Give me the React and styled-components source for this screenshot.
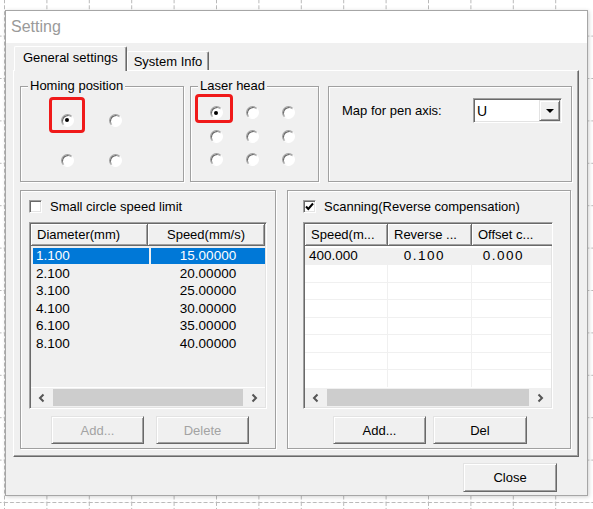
import React from "react";
import styled, { createGlobalStyle } from "styled-components";

const GlobalStyle = createGlobalStyle`
  html, body { margin: 0; padding: 0; background: #fff; }
  body {
    font-family: "Liberation Sans", Arial, sans-serif;
    font-size: 13px;
    color: #000;
  }
  * { box-sizing: border-box; }
`;

const Page = styled.div`
  position: relative;
  width: 593px;
  height: 509px;
  overflow: hidden;
  padding: 10px 0 0 5px;
`;

const Backdrop = styled.svg`
  position: absolute;
  top: 0;
  left: 0;
`;

const Window = styled.div`
  position: relative;
  width: 583px;
  height: 486px;
  border: 1px solid #a6a6a6;
  box-shadow: 1px 1px 4px rgba(0, 0, 0, 0.18);
  display: flex;
  flex-direction: column;
  background: #f0f0f0;
`;

const TitleBar = styled.div`
  height: 32px;
  flex: none;
  background: #fff;
  display: flex;
  align-items: center;
  padding-left: 5px;
  font-size: 16px;
  color: #9a9a9a;
`;

const Body = styled.div`
  flex: 1;
  padding: 3px 0 0 7px;
`;

const TabStrip = styled.div`
  display: flex;
  align-items: flex-end;
  height: 24px;
  padding-left: 1px;
  position: relative;
  z-index: 2;
`;

const Tab = styled.div`
  height: ${(p) => (p.$active ? 25 : 19)}px;
  margin-bottom: ${(p) => (p.$active ? -1 : 0)}px;
  padding: 0 ${(p) => (p.$active ? 8 : 6)}px ${(p) => (p.$active ? 3 : 0)}px;
  display: flex;
  align-items: center;
  background: #f0f0f0;
  border-top: 1px solid #fff;
  border-left: 1px solid #fff;
  border-right: 1px solid #696969;
  box-shadow: inset -1px 0 0 #a0a0a0;
  border-radius: 2px 2px 0 0;
`;

const Panel = styled.div`
  width: 566px;
  height: 387px;
  border-top: 1px solid #fff;
  border-left: 1px solid #fff;
  border-right: 1px solid #696969;
  border-bottom: 1px solid #696969;
  box-shadow: inset -1px -1px 0 #a0a0a0;
  padding: 15px 0 0 6px;
  display: flex;
  flex-direction: column;
`;

const GroupRow = styled.div`
  display: flex;
  flex: none;
  height: ${(p) => p.$h}px;
  margin-top: ${(p) => p.$mt || 0}px;
`;

const Group = styled.div`
  width: ${(p) => p.$w}px;
  margin-left: ${(p) => p.$ml || 0}px;
  height: 100%;
  border: 1px solid #a0a0a0;
  box-shadow: inset 1px 1px 0 #fff, 1px 1px 0 #fff;
  display: flex;
  flex-direction: column;
  padding: ${(p) => p.$pad || "0"};
`;

const Legend = styled.span`
  align-self: flex-start;
  margin: -9px 0 0 7px;
  padding: 0 2px;
  line-height: 16px;
  background: #f0f0f0;
`;

const RadioGrid = styled.div`
  display: grid;
  grid-template-columns: repeat(${(p) => p.$cols}, ${(p) => p.$cw}px);
  grid-auto-rows: ${(p) => p.$rh}px;
  place-items: center;
  margin: ${(p) => p.$m};
`;

const Radio = styled.span`
  position: relative;
  width: 13px;
  height: 13px;
  border-radius: 50%;
  background: #fff;
  border: 1px solid;
  border-color: #a0a0a0 #fff #fff #a0a0a0;
  box-shadow: inset 1px 1px 0 #696969;
  display: flex;
  align-items: center;
  justify-content: center;
  &::after {
    content: "";
    width: 4px;
    height: 4px;
    border-radius: 50%;
    background: #000;
    display: ${(p) => (p.$checked ? "block" : "none")};
  }
`;

const Highlight = styled.span`
  position: absolute;
  left: ${(p) => p.$l}px;
  top: ${(p) => p.$t}px;
  width: ${(p) => p.$w}px;
  height: ${(p) => p.$h}px;
  border: 3px solid #f01a1a;
  border-radius: 4px;
  pointer-events: none;
`;

const FieldRow = styled.div`
  display: flex;
  align-items: center;
  height: 25px;
`;

const Combo = styled.div`
  margin-left: auto;
  width: 89px;
  height: 25px;
  background: #fff;
  border: 1px solid;
  border-color: #a0a0a0 #fff #fff #a0a0a0;
  box-shadow: inset 1px 1px 0 #696969, inset -1px -1px 0 #e3e3e3;
  padding: 1px;
  display: flex;
`;

const ComboValue = styled.span`
  flex: 1;
  padding-left: 2px;
  display: flex;
  align-items: center;
  font-size: 14px;
`;

const DropButton = styled.span`
  width: 21px;
  background: #f0f0f0;
  border: 1px solid;
  border-color: #e3e3e3 #696969 #696969 #e3e3e3;
  box-shadow: inset 1px 1px 0 #fff, inset -1px -1px 0 #a0a0a0;
  display: flex;
  align-items: center;
  justify-content: center;
  &::after {
    content: "";
    border-left: 4px solid transparent;
    border-right: 4px solid transparent;
    border-top: 4px solid #000;
  }
`;

const CheckRow = styled.label`
  display: flex;
  align-items: center;
  gap: 8px;
  height: 13px;
  line-height: 16px;
`;

const CheckBox = styled.span`
  width: 13px;
  height: 13px;
  flex: none;
  background: #fff;
  border: 1px solid;
  border-color: #a0a0a0 #fff #fff #a0a0a0;
  box-shadow: inset 1px 1px 0 #696969, inset -1px -1px 0 #e3e3e3;
  display: flex;
  align-items: center;
  justify-content: center;
`;

const ListView = styled.div`
  width: ${(p) => p.$w}px;
  height: 187px;
  margin-top: 9px;
  flex: none;
  border: 1px solid;
  border-color: #a0a0a0 #fff #fff #a0a0a0;
  box-shadow: inset 1px 1px 0 #696969, inset -1px -1px 0 #e3e3e3;
  padding: 1px;
  background: ${(p) => p.$bg};
  display: flex;
  flex-direction: column;
  overflow: hidden;
`;

const HeaderRow = styled.div`
  display: flex;
  flex: none;
  height: 22px;
`;

const HeaderCell = styled.div`
  width: ${(p) => p.$w}px;
  flex: none;
  display: flex;
  align-items: center;
  justify-content: ${(p) => (p.$center ? "center" : "flex-start")};
  padding-left: ${(p) => (p.$center ? 0 : 6)}px;
  background: #f0f0f0;
  border-right: 1px solid #696969;
  border-bottom: 1px solid #696969;
  box-shadow: inset 1px 1px 0 #fff, inset -1px -1px 0 #a0a0a0;
  white-space: nowrap;
  overflow: hidden;
`;

const Rows = styled.div`
  flex: 1;
  padding-top: 1.5px;
  overflow: hidden;
`;

const Row = styled.div`
  display: flex;
  height: 17.5px;
  padding-left: ${(p) => p.$pl || 0}px;
  gap: ${(p) => p.$gap || 0}px;
  background: ${(p) => p.$shade || "transparent"};
  border-bottom: ${(p) => (p.$grid ? "1px solid #f0f0f0" : "none")};
`;

const Cell = styled.div`
  width: ${(p) => p.$w}px;
  flex: none;
  height: ${(p) => (p.$grid ? "100%" : "16.5px")};
  display: flex;
  align-items: center;
  justify-content: ${(p) => (p.$center ? "center" : "flex-start")};
  padding-left: ${(p) => p.$pl || 0}px;
  padding-right: ${(p) => p.$pr || 0}px;
  font-size: 13.5px;
  letter-spacing: ${(p) => p.$ls || 0}px;
  background: ${(p) => (p.$selected ? "#0078d7" : "transparent")};
  color: ${(p) => (p.$selected ? "#fff" : "#000")};
  border-right: ${(p) => (p.$grid ? "1px solid #f0f0f0" : "none")};
  white-space: nowrap;
`;

const ScrollBar = styled.div`
  flex: none;
  height: 20px;
  display: flex;
  background: #f0f0f0;
  border-top: 1px solid #fff;
`;

const ScrollArrow = styled.span`
  width: 22px;
  display: flex;
  align-items: center;
  justify-content: center;
`;

const ScrollThumb = styled.span`
  flex: 1;
  background: #cdcdcd;
  margin: 1px 0;
`;

const ButtonRow = styled.div`
  display: flex;
  gap: ${(p) => p.$gap}px;
  padding-left: ${(p) => p.$indent}px;
  margin-top: 7px;
`;

const Button = styled.button`
  width: ${(p) => p.$w || 93}px;
  height: ${(p) => p.$h || 28}px;
  padding: 0;
  font: inherit;
  color: ${(p) => (p.disabled ? "#a3a3a3" : "#000")};
  background: #f0f0f0;
  border: 1px solid;
  border-color: #e3e3e3 #696969 #696969 #e3e3e3;
  box-shadow: inset 1px 1px 0 #fff, inset -1px -1px 0 #a0a0a0;
`;

const Footer = styled.div`
  width: 566px;
  display: flex;
  justify-content: flex-end;
  padding-right: 22px;
  margin-top: 6px;
`;

const Chevron = ({ dir }) => (
  <svg width="8" height="10" viewBox="0 0 8 10">
    <path
      d={dir === "left" ? "M5.5 1.5 L2 5 L5.5 8.5" : "M2.5 1.5 L6 5 L2.5 8.5"}
      fill="none"
      stroke="#555"
      strokeWidth="2"
    />
  </svg>
);

const Check = () => (
  <svg width="11" height="11" viewBox="0 0 11 11">
    <path d="M2 5.5 L4.3 8 L9 2.5" fill="none" stroke="#000" strokeWidth="2" />
  </svg>
);

const Scroller = () => (
  <ScrollBar>
    <ScrollArrow>
      <Chevron dir="left" />
    </ScrollArrow>
    <ScrollThumb />
    <ScrollArrow>
      <Chevron dir="right" />
    </ScrollArrow>
  </ScrollBar>
);

const circles = [
  ["1.100", "15.00000"],
  ["2.100", "20.00000"],
  ["3.100", "25.00000"],
  ["4.100", "30.00000"],
  ["6.100", "35.00000"],
  ["8.100", "40.00000"],
];

const scanCols = [
  { w: 83, title: "Speed(m..." },
  { w: 84, title: "Reverse ..." },
  { w: 90, title: "Offset c..." },
];

function App() {
  return (
    <Page>
      <GlobalStyle />
      <Backdrop width="593" height="509">
        <defs>
          <pattern id="grid" x="4" y="35.6" width="42.4" height="42.4" patternUnits="userSpaceOnUse">
            <path d="M0.5 0 V42.4" stroke="#b9b9b9" strokeDasharray="4 2" />
            <path d="M0 0.5 H42.4" stroke="#b9b9b9" strokeDasharray="4 2" />
          </pattern>
        </defs>
        <rect width="593" height="509" fill="url(#grid)" />
      </Backdrop>

      <Window>
        <TitleBar>Setting</TitleBar>
        <Body>
          <TabStrip>
            <Tab $active>General settings</Tab>
            <Tab>System Info</Tab>
          </TabStrip>
          <Panel>
            <GroupRow $h={96}>
              <Group $w={164}>
                <Legend>Homing position</Legend>
                <RadioGrid $cols={2} $cw={48} $rh={40} $m="6px 0 0 22px">
                  <Radio $checked>
                    <Highlight $l={-12.5} $t={-17.5} $w={36} $h={36} />
                  </Radio>
                  <Radio />
                  <Radio />
                  <Radio />
                </RadioGrid>
              </Group>
              <Group $w={129} $ml={6}>
                <Legend>Laser head</Legend>
                <RadioGrid $cols={3} $cw={36} $rh={23.5} $m="7px 0 0 7px">
                  <Radio $checked>
                    <Highlight $l={-15.5} $t={-13.5} $w={38} $h={29} />
                  </Radio>
                  {Array.from({ length: 8 }).map((_, i) => (
                    <Radio key={i} />
                  ))}
                </RadioGrid>
              </Group>
              <Group $w={244} $ml={9} $pad="11px 9px 0 13px">
                <FieldRow>
                  <span>Map for pen axis:</span>
                  <Combo>
                    <ComboValue>U</ComboValue>
                    <DropButton />
                  </Combo>
                </FieldRow>
              </Group>
            </GroupRow>

            <GroupRow $h={259} $mt={8}>
              <Group $w={256} $pad="9px 0 0 8px">
                <CheckRow>
                  <CheckBox />
                  Small circle speed limit
                </CheckRow>
                <ListView $w={238} $bg="#f0f0f0">
                  <HeaderRow>
                    <HeaderCell $w={117}>Diameter(mm)</HeaderCell>
                    <HeaderCell $w={117} $center>
                      Speed(mm/s)
                    </HeaderCell>
                  </HeaderRow>
                  <Rows>
                    {circles.map(([d, s], i) => (
                      <Row key={d} $pl={2} $gap={2}>
                        <Cell $w={116} $pl={3} $selected={i === 0}>
                          {d}
                        </Cell>
                        <Cell $w={114} $center $selected={i === 0}>
                          {s}
                        </Cell>
                      </Row>
                    ))}
                  </Rows>
                  <Scroller />
                </ListView>
                <ButtonRow $gap={12} $indent={22}>
                  <Button disabled>Add...</Button>
                  <Button disabled>Delete</Button>
                </ButtonRow>
              </Group>

              <Group $w={284} $ml={11} $pad="9px 0 0 15px">
                <CheckRow>
                  <CheckBox>
                    <Check />
                  </CheckBox>
                  Scanning(Reverse compensation)
                </CheckRow>
                <ListView $w={250} $bg="#fff">
                  <HeaderRow>
                    {scanCols.map((c) => (
                      <HeaderCell key={c.title} $w={c.w}>
                        {c.title}
                      </HeaderCell>
                    ))}
                  </HeaderRow>
                  <Rows>
                    <Row $grid $shade="#f0f0f0">
                      <Cell $grid $w={83} $pl={4}>
                        400.000
                      </Cell>
                      <Cell $grid $w={84} $center $pr={10} $ls={1.5}>
                        0.100
                      </Cell>
                      <Cell $grid $w={90} $center $pr={26} $ls={1.5}>
                        0.000
                      </Cell>
                    </Row>
                    {Array.from({ length: 7 }).map((_, i) => (
                      <Row key={i} $grid>
                        {scanCols.map((c) => (
                          <Cell key={c.title} $grid $w={c.w} />
                        ))}
                      </Row>
                    ))}
                  </Rows>
                  <Scroller />
                </ListView>
                <ButtonRow $gap={7} $indent={30}>
                  <Button>Add...</Button>
                  <Button $w={94}>Del</Button>
                </ButtonRow>
              </Group>
            </GroupRow>
          </Panel>
          <Footer>
            <Button $w={94} $h={29}>
              Close
            </Button>
          </Footer>
        </Body>
      </Window>
    </Page>
  );
}

export default App;
